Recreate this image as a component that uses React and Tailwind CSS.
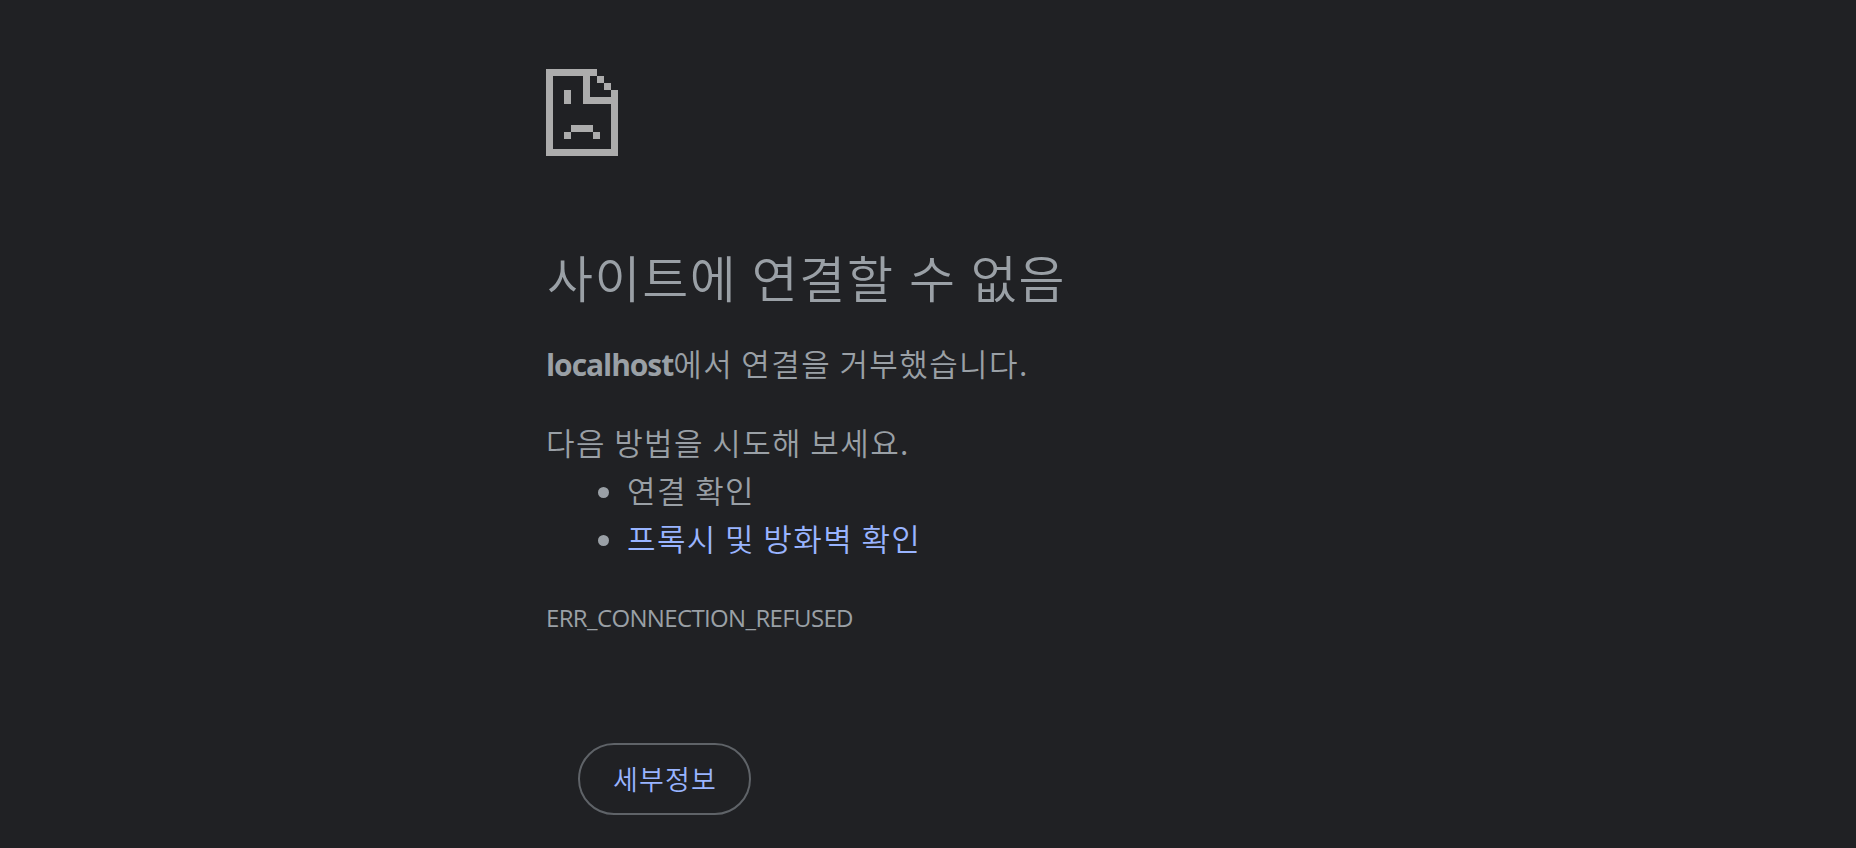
import React from "react";

const SadPageIcon = () => (
  <svg width="72" height="87" viewBox="0 0 72 87" fill="#acacac" shapeRendering="crispEdges">
    <path d="M0 0h51v7H7v73h58V21h7v66H0z" />
    <path d="M37 7h7v21h21v7H37z" />
    <path d="M51 7h7v7h-7zM58 14h7v7h-7z" />
    <path d="M18 21h7v14h-7z" />
    <path d="M25 56h22v7H25zM18 63h7v7h-7zM47 63h7v7h-7z" />
  </svg>
);

const App = () => {
  return (
    <div className="h-[848px] overflow-hidden bg-[#202124] pl-[546px] pt-[69px] font-['Noto_Sans_CJK_KR',sans-serif] text-[31px] font-[350] leading-[48px] tracking-[1.4px] text-[#9aa0a6]">
      <SadPageIcon />

      <h1 className="mt-[88px] h-[64px] whitespace-nowrap pl-px text-[50px] font-[350] leading-[64px] tracking-[1.6px] [word-spacing:1.6px]">
        사이트에 연결할 수 없음
      </h1>

      <p className="mt-[31px] h-[48px] whitespace-nowrap">
        <strong className="font-['Open_Sans',sans-serif] text-[30px] font-bold tracking-[-1.05px]">localhost</strong>
        에서 연결을 거부했습니다.
      </p>

      <div className="mt-[31px] whitespace-nowrap">
        <p>다음 방법을 시도해 보세요.</p>
        <ul>
          <li className="flex items-center pl-[52px]">
            <span className="mr-[18px] mt-[5px] size-[11px] rounded-full bg-[#9aa0a6]" />
            <span>연결 확인</span>
          </li>
          <li className="flex items-center pl-[52px]">
            <span className="mr-[18px] mt-[5px] size-[11px] rounded-full bg-[#9aa0a6]" />
            <a href="#proxy" className="text-[#99b4ff]">프록시 및 방화벽 확인</a>
          </li>
        </ul>
      </div>

      <div className="mt-[37px] h-[38px] font-['Open_Sans',sans-serif] text-[24px] font-normal leading-[38px] tracking-[-0.64px]">
        ERR_CONNECTION_REFUSED
      </div>

      <button
        type="button"
        className="ml-[32px] mt-[106px] flex h-[72px] w-[173px] items-center justify-center rounded-full border-2 border-[#5f6368] pl-px text-[27px] tracking-[1.2px] text-[#99b4ff]"
      >
        세부정보
      </button>
    </div>
  );
};

export default App;
